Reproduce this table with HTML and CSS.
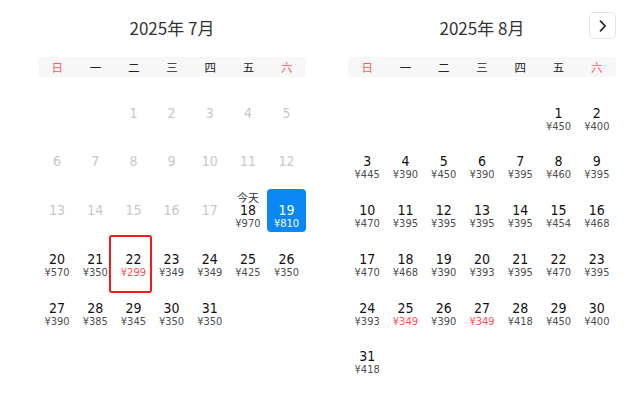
FILE: index.html
```html
<!DOCTYPE html>
<html lang="zh-CN">
<head>
<meta charset="utf-8">
<link rel="stylesheet" href="styles.css">
</head>
<body>
<div class="picker">
  <button class="nav-next" aria-label="下个月">
    <svg width="10" height="12" viewBox="0 0 10 12"><path d="M2.5 1.2 L7.2 6 L2.5 10.8" fill="none" stroke="#222" stroke-width="1.7" stroke-linecap="round" stroke-linejoin="round"/></svg>
  </button>

  <section class="month">
    <h2 class="title">2025年 7月</h2>
    <div class="weekdays"><span class="wk-red">日</span><span>一</span><span>二</span><span>三</span><span>四</span><span>五</span><span class="wk-red">六</span></div>
    <div class="days">
      <div class="day"></div><div class="day"></div>
      <div class="day off"><i></i><b>1</b></div>
      <div class="day off"><i></i><b>2</b></div>
      <div class="day off"><i></i><b>3</b></div>
      <div class="day off"><i></i><b>4</b></div>
      <div class="day off"><i></i><b>5</b></div>
      <div class="day off"><i></i><b>6</b></div>
      <div class="day off"><i></i><b>7</b></div>
      <div class="day off"><i></i><b>8</b></div>
      <div class="day off"><i></i><b>9</b></div>
      <div class="day off"><i></i><b>10</b></div>
      <div class="day off"><i></i><b>11</b></div>
      <div class="day off"><i></i><b>12</b></div>
      <div class="day off"><i></i><b>13</b></div>
      <div class="day off"><i></i><b>14</b></div>
      <div class="day off"><i></i><b>15</b></div>
      <div class="day off"><i></i><b>16</b></div>
      <div class="day off"><i></i><b>17</b></div>
      <div class="day"><i>今天</i><b>18</b><em>¥970</em></div>
      <div class="day selected"><i></i><b>19</b><em>¥810</em></div>
      <div class="day"><i></i><b>20</b><em>¥570</em></div>
      <div class="day"><i></i><b>21</b><em>¥350</em></div>
      <div class="day marked"><i></i><b>22</b><em class="low">¥299</em></div>
      <div class="day"><i></i><b>23</b><em>¥349</em></div>
      <div class="day"><i></i><b>24</b><em>¥349</em></div>
      <div class="day"><i></i><b>25</b><em>¥425</em></div>
      <div class="day"><i></i><b>26</b><em>¥350</em></div>
      <div class="day"><i></i><b>27</b><em>¥390</em></div>
      <div class="day"><i></i><b>28</b><em>¥385</em></div>
      <div class="day"><i></i><b>29</b><em>¥345</em></div>
      <div class="day"><i></i><b>30</b><em>¥350</em></div>
      <div class="day"><i></i><b>31</b><em>¥350</em></div>
    </div>
  </section>

  <section class="month">
    <h2 class="title">2025年 8月</h2>
    <div class="weekdays"><span class="wk-red">日</span><span>一</span><span>二</span><span>三</span><span>四</span><span>五</span><span class="wk-red">六</span></div>
    <div class="days">
      <div class="day"></div><div class="day"></div><div class="day"></div><div class="day"></div><div class="day"></div>
      <div class="day"><i></i><b>1</b><em>¥450</em></div>
      <div class="day"><i></i><b>2</b><em>¥400</em></div>
      <div class="day"><i></i><b>3</b><em>¥445</em></div>
      <div class="day"><i></i><b>4</b><em>¥390</em></div>
      <div class="day"><i></i><b>5</b><em>¥450</em></div>
      <div class="day"><i></i><b>6</b><em>¥390</em></div>
      <div class="day"><i></i><b>7</b><em>¥395</em></div>
      <div class="day"><i></i><b>8</b><em>¥460</em></div>
      <div class="day"><i></i><b>9</b><em>¥395</em></div>
      <div class="day"><i></i><b>10</b><em>¥470</em></div>
      <div class="day"><i></i><b>11</b><em>¥395</em></div>
      <div class="day"><i></i><b>12</b><em>¥395</em></div>
      <div class="day"><i></i><b>13</b><em>¥395</em></div>
      <div class="day"><i></i><b>14</b><em>¥395</em></div>
      <div class="day"><i></i><b>15</b><em>¥454</em></div>
      <div class="day"><i></i><b>16</b><em>¥468</em></div>
      <div class="day"><i></i><b>17</b><em>¥470</em></div>
      <div class="day"><i></i><b>18</b><em>¥468</em></div>
      <div class="day"><i></i><b>19</b><em>¥390</em></div>
      <div class="day"><i></i><b>20</b><em>¥393</em></div>
      <div class="day"><i></i><b>21</b><em>¥395</em></div>
      <div class="day"><i></i><b>22</b><em>¥470</em></div>
      <div class="day"><i></i><b>23</b><em>¥395</em></div>
      <div class="day"><i></i><b>24</b><em>¥393</em></div>
      <div class="day"><i></i><b>25</b><em class="low">¥349</em></div>
      <div class="day"><i></i><b>26</b><em>¥390</em></div>
      <div class="day"><i></i><b>27</b><em class="low">¥349</em></div>
      <div class="day"><i></i><b>28</b><em>¥418</em></div>
      <div class="day"><i></i><b>29</b><em>¥450</em></div>
      <div class="day"><i></i><b>30</b><em>¥400</em></div>
      <div class="day"><i></i><b>31</b><em>¥418</em></div>
    </div>
  </section>
</div>
</body>
</html>
```

FILE: styles.css
```css
html, body {
  margin: 0;
  padding: 0;
  background: #fff;
}

.picker {
  position: relative;
  width: 640px;
  height: 394px;
  display: flex;
  gap: 42px;
  padding-left: 38px;
  box-sizing: border-box;
}

.month {
  width: 268px;
  display: flex;
  flex-direction: column;
}

.title {
  margin: 0;
  height: 54px;
  margin-bottom: 3px;
  display: flex;
  align-items: center;
  justify-content: center;
  font-family: "Noto Sans CJK SC", sans-serif;
  font-weight: 400;
  font-size: 17px;
  color: #333;
}

.weekdays {
  height: 20px;
  background: #f7f7f7;
  border-radius: 4px;
  display: grid;
  grid-template-columns: repeat(7, 1fr);
  align-items: center;
  justify-items: center;
  font-family: "Noto Sans CJK SC", sans-serif;
  font-size: 11.5px;
  line-height: 20px;
  color: #222;
}

.wk-red {
  color: #ff5a5a;
}

.days {
  margin-top: 14px;
  display: grid;
  grid-template-columns: repeat(7, 1fr);
  grid-auto-rows: 43px;
  row-gap: 5.8px;
  font-family: "DejaVu Sans Condensed", "DejaVu Sans", sans-serif;
  font-stretch: semi-condensed;
}

.day {
  position: relative;
  display: flex;
  flex-direction: column;
  align-items: center;
  padding-top: 2.5px;
  box-sizing: border-box;
  border-radius: 4px;
}

.day i {
  font-style: normal;
  height: 13px;
  line-height: 13px;
  font-family: "Noto Sans CJK SC", sans-serif;
  font-size: 11px;
  color: #333;
}

.day b {
  font-weight: 400;
  height: 13px;
  line-height: 13px;
  font-size: 14px;
  color: #111;
}

.day em {
  font-style: normal;
  height: 13px;
  line-height: 13px;
  font-size: 11px;
  color: #4d4d4d;
}

.day em.low {
  color: #ff4d4f;
}

.day.off b {
  color: #c8c8c8;
}

.day.selected {
  background: #0a87f2;
  width: 39px;
}

.day.selected b,
.day.selected em {
  color: #fff;
}

.day.marked::after {
  content: "";
  position: absolute;
  top: -2px;
  left: -5px;
  width: 43px;
  height: 58px;
  border: 2px solid #f21a1a;
  border-radius: 3px;
  box-sizing: border-box;
}

.nav-next {
  position: absolute;
  top: 12px;
  right: 24px;
  width: 27px;
  height: 27px;
  padding: 0;
  border: 1px solid #e6e6e6;
  border-radius: 5px;
  background: #fff;
  display: flex;
  align-items: center;
  justify-content: center;
}
```
